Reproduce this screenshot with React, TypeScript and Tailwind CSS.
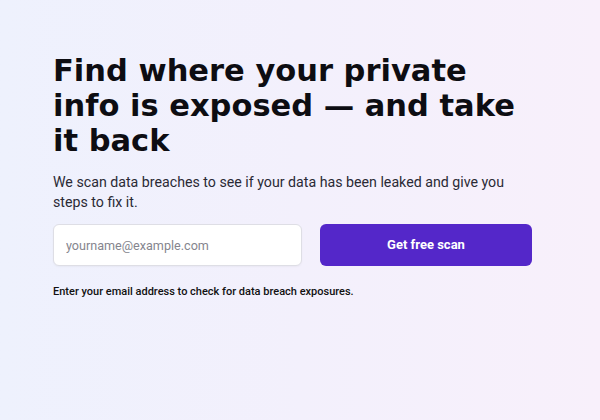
export default function App() {
  return (
    <div className="w-[600px] h-[420px] bg-gradient-to-r from-[#eef1fd] via-[#f3f0fc] to-[#f8f0fb] font-['Roboto',sans-serif]">
      <div className="pl-[53px] pt-[53px]">
        <h1 className="font-['DejaVu_Sans',sans-serif] text-[30.5px] leading-[35px] font-bold text-[#0d0d12] max-w-[500px]">
          Find where your private
          <br />
          info is exposed — and take
          <br />
          it back
        </h1>
        <p className="mt-[14px] text-[14.2px] leading-[20px] text-[#2a2a35] max-w-[470px]">
          We scan data breaches to see if your data has been leaked and give you steps to fix it.
        </p>
        <form className="mt-[12px] flex gap-[18px] w-[479px]" onSubmit={(e) => e.preventDefault()}>
          <input
            type="email"
            placeholder="yourname@example.com"
            className="h-[42px] w-[249px] rounded-md border border-[#dedee5] bg-white px-3 text-[12.6px] text-[#333] placeholder:text-[#85858e] outline-none shadow-[0_1px_2px_rgba(0,0,0,0.04)]"
          />
          <button
            type="submit"
            className="h-[42px] flex-1 rounded-md bg-[#5427c9] text-[13px] font-bold text-white"
          >
            Get free scan
          </button>
        </form>
        <p className="mt-[18px] text-[11px] leading-[16px] font-medium text-[#111]">
          Enter your email address to check for data breach exposures.
        </p>
      </div>
    </div>
  );
}
